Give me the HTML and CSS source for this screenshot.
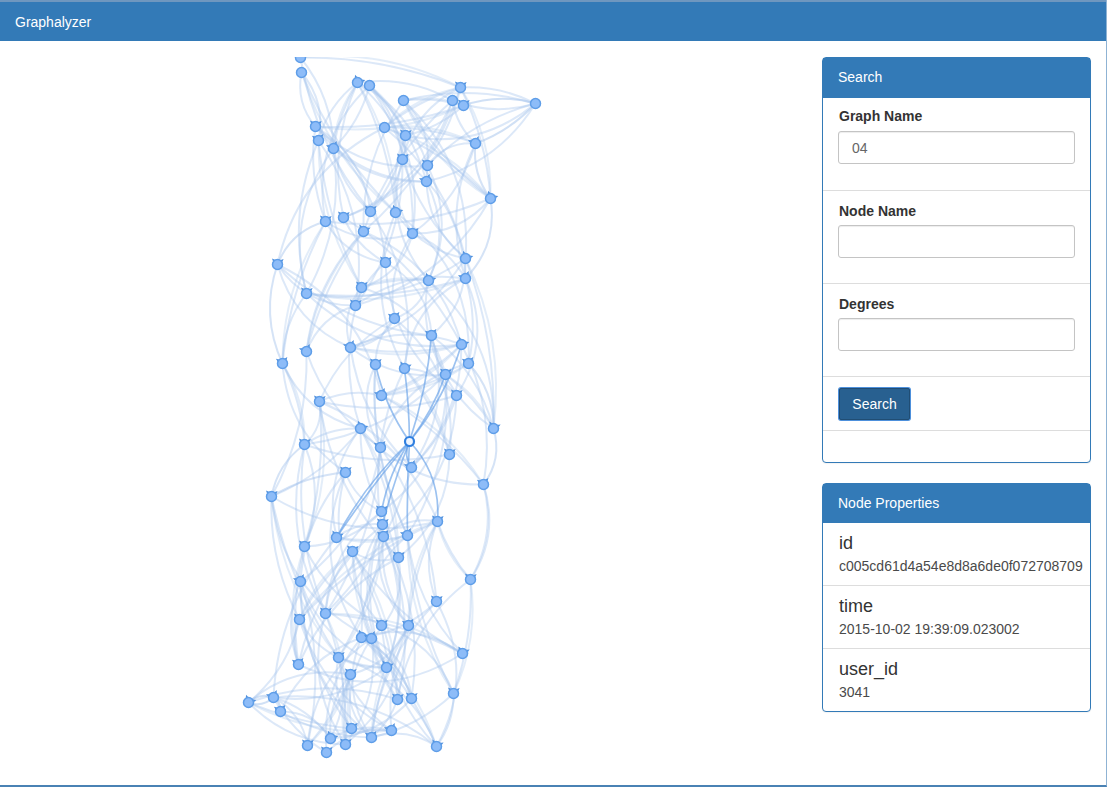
FILE: index.html
```html
<!DOCTYPE html>
<html lang="en">
<head>
<meta charset="utf-8">
<title>Graphalyzer</title>
<link rel="stylesheet" href="styles.css">
</head>
<body>
<div class="app">
  <header class="navbar">Graphalyzer</header>
  <main class="content">
    <div class="graph-area">
      <svg id="graph" class="graph" width="820" height="714" viewBox="-0.5 56.5 820 714" aria-label="Graph"></svg>
    </div>
    <aside class="sidebar">
      <section class="panel">
        <h2 class="panel-heading panel-heading-search">Search</h2>
        <div class="item">
          <label class="field-label" for="graph-name">Graph Name</label>
          <input class="field-input" id="graph-name" type="text" value="04">
        </div>
        <div class="item">
          <label class="field-label" for="node-name">Node Name</label>
          <input class="field-input" id="node-name" type="text">
        </div>
        <div class="item">
          <label class="field-label" for="degrees">Degrees</label>
          <input class="field-input" id="degrees" type="text">
        </div>
        <div class="item item-button">
          <button class="btn" type="button">Search</button>
        </div>
        <div class="item item-empty"></div>
      </section>
      <section class="panel">
        <h2 class="panel-heading">Node Properties</h2>
        <div class="prop">
          <h4 class="prop-name">id</h4>
          <p class="prop-value">c005cd61d4a54e8d8a6de0f072708709</p>
        </div>
        <div class="prop">
          <h4 class="prop-name">time</h4>
          <p class="prop-value">2015-10-02 19:39:09.023002</p>
        </div>
        <div class="prop">
          <h4 class="prop-name">user_id</h4>
          <p class="prop-value">3041</p>
        </div>
      </section>
    </aside>
  </main>
</div>
<script src="graph.js"></script>
</body>
</html>
```
FILE: styles.css
```css
* { box-sizing: border-box; }
html, body { margin: 0; height: 100%; background: #fff; }
body {
  font-family: "Liberation Sans", Arial, sans-serif;
  font-size: 14px;
  line-height: 20px;
  color: #333;
  overflow: hidden;
}
.app {
  width: 1107px;
  height: 787px;
  border-bottom: 2px solid #4a82b4;
  border-right: 1px solid #8fb3d4;
  display: flex;
  flex-direction: column;
}
.navbar {
  height: 41px;
  flex: none;
  background: #337ab7;
  border-top: 2px solid #6f97bf;
  color: #fff;
  padding: 11px 15px 0;
  line-height: 18px;
}
.content { flex: 1; display: flex; min-height: 0; }
.graph-area { width: 822px; flex: none; padding-top: 16px; }
.graph { display: block; }
.sidebar {
  width: 269px;
  flex: none;
  padding-top: 16px;
  display: flex;
  flex-direction: column;
  gap: 20px;
}
.panel {
  border: 1px solid #337ab7;
  border-radius: 4px;
  background: #fff;
  box-shadow: 0 1px 1px rgba(0,0,0,.05);
}
.panel-heading {
  margin: 0;
  background: #337ab7;
  color: #fff;
  font-size: 14px;
  font-weight: 400;
  line-height: 20px;
  padding: 9px 15px 10px;
}
.panel-heading-search { padding-bottom: 11px; }
.item { height: 93px; padding: 8px 15px 0; border-bottom: 1px solid #ddd; }
.item + .item { padding-top: 10px; }
.field-label {
  display: block;
  padding-left: 1px;
  font-weight: 700;
  margin-bottom: 4px;
}
.panel-heading + .item .field-label { margin-bottom: 5px; }
.field-input {
  display: block;
  width: 237px;
  height: 33px;
  padding: 6px 13px;
  font: 14px/20px "Liberation Sans", Arial, sans-serif;
  color: #666;
  background: #fff;
  border: 1px solid #c4c4c4;
  border-radius: 3px;
  box-shadow: inset 0 1px 1px rgba(0,0,0,.075);
}
.item.item-button { height: 54px; padding: 11px 15px 0 16px; }
.item-empty { height: 31px; border-bottom: 0; }
.btn {
  display: block;
  width: 71px;
  height: 32px;
  padding: 0;
  font: 14px/20px "Liberation Sans", Arial, sans-serif;
  color: #fff;
  background: #286090;
  border: 1px solid #204d74;
  border-radius: 2px;
  box-shadow: 0 0 0 1px #4d90dc;
}
.prop { height: 63px; padding: 10px 15px 0 16px; border-bottom: 1px solid #ddd; }
.prop:last-child { height: 62px; border-bottom: 0; }
.prop-name {
  margin: 0 0 4px;
  font-size: 18px;
  font-weight: 400;
  line-height: 20px;
  white-space: nowrap;
}
.prop-value {
  margin: 0;
  color: #4a4a4a;
  font-size: 14px;
  line-height: 18px;
  white-space: nowrap;
}
```
FILE: graph.js
```js
// Force-directed graph: node positions and edges as data, drawn into the SVG.
const NS = "http://www.w3.org/2000/svg";
const svg = document.getElementById("graph");
const N = [[300,57,0],[301,72,0],[357,82,1],[369,85,0],[460,87,1],[403,100,0],[452,100,0],[463,105,1],[535,103,0],[315,126,1],[384,127,0],[318,140,1],[333,148,1],[405,135,1],[475,143,1],[402,159,1],[427,165,1],[426,181,1],[490,198,1],[325,221,1],[343,217,1],[370,211,1],[395,212,1],[363,231,1],[412,233,1],[277,264,1],[385,262,1],[465,258,1],[465,278,1],[428,280,1],[361,287,1],[306,293,1],[355,305,1],[394,318,1],[431,335,1],[461,344,1],[350,347,1],[306,351,1],[282,363,1],[375,364,1],[404,368,1],[468,363,1],[445,374,1],[381,395,1],[456,395,1],[319,401,1],[360,428,1],[493,428,1],[304,444,1],[380,447,1],[449,454,1],[411,467,1],[345,472,1],[483,484,1],[271,496,1],[381,511,1],[437,521,1],[382,524,1],[336,537,1],[383,536,1],[407,535,1],[304,546,1],[352,551,1],[398,557,1],[300,581,1],[470,579,1],[436,601,1],[299,619,1],[325,613,1],[408,625,1],[381,625,1],[361,637,1],[371,638,1],[338,657,1],[298,664,1],[386,667,1],[462,653,1],[350,674,1],[453,693,1],[273,697,1],[397,699,1],[411,698,1],[248,702,1],[280,711,1],[391,730,1],[351,728,1],[371,737,1],[330,738,1],[345,744,1],[307,745,1],[326,752,1],[436,746,1]];
const HUB = [409, 441];
const CENTER_X = 385;

function el(name, attrs, parent) {
  const e = document.createElementNS(NS, name);
  for (const k in attrs) e.setAttribute(k, attrs[k]);
  parent.appendChild(e);
  return e;
}
function arc(a, b, bend, stroke, width, opacity) {
  const mx = (a[0] + b[0]) / 2, my = (a[1] + b[1]) / 2;
  const dx = b[0] - a[0], dy = b[1] - a[1];
  el("path", {
    d: `M${a[0]} ${a[1]}Q${mx - dy * bend} ${my + dx * bend} ${b[0]} ${b[1]}`,
    fill: "none", stroke, "stroke-width": width, "stroke-opacity": opacity
  }, svg);
}
function hash(i, j) {
  let h = Math.imul(i * 2654435761 + j * 40503 + 97, 0x5bd1e995);
  h ^= h >>> 13;
  h = Math.imul(h + j * 31, 0x5bd1e995);
  h ^= h >>> 15;
  return (h >>> 0) % 1000;
}
const EDGE = "#a2c2ec";

// Ordinary edges: every node links to three others of its neighbourhood;
// arcs mostly bulge away from the centre column, as in a force layout.
N.forEach((a, i) => {
  const picks = N.map((b, j) => ({ b, j, d: Math.hypot(b[0] - a[0], b[1] - a[1]), s: hash(i, j) }))
    .filter(o => o.j !== i && o.d > 45 && o.d < 175)
    .map(o => ({ ...o, s: o.s * (Math.abs(o.b[1] - a[1]) > Math.abs(o.b[0] - a[0]) ? 1 : 1.9) }))
    .sort((x, y) => x.s - y.s)
    .slice(0, 3);
  for (const { b, j } of picks) {
    const h = hash(j, i);
    const mag = 0.1 + (h % 6) * 0.035;
    const dy = b[1] - a[1];
    const midX = (a[0] + b[0]) / 2;
    const outward = (midX < CENTER_X ? -1 : 1);
    const sign = Math.sign(-dy * outward) || 1;
    const s = h % 10 < 7 ? sign : -sign;
    arc(a, b, s * mag, EDGE, 2, 0.38);
    if (h % 6 === 0) arc(a, b, s * mag * 1.5, EDGE, 2, 0.3);
  }
});

// Named edges at the outer nodes and around the highlighted hub.
arc([535,103],[463,105],0.16,EDGE,2,.5);
arc([535,103],[475,143],-0.12,EDGE,2,.5);
arc([490,198],[475,143],-0.2,EDGE,2,.45);
arc([490,198],[465,278],-0.25,EDGE,2,.45);
arc([277,264],[325,221],-0.25,EDGE,2,.45);
arc([277,264],[282,363],0.2,EDGE,2,.45);
arc([271,496],[304,444],-0.2,EDGE,2,.45);
arc([271,496],[345,472],-0.12,EDGE,2,.45);
arc([493,428],[483,484],-0.25,EDGE,2,.45);
arc([468,363],[493,428],-0.2,EDGE,2,.45);
arc([248,702],[273,697],0.3,EDGE,2,.5);
arc([248,702],[273,697],-0.3,EDGE,2,.5);
arc([280,711],[273,697],0.3,EDGE,2,.5);
for (const t of [[375,364,-.1],[404,368,.03],[431,335,.06],[461,344,.1],[445,374,.08],[336,537,.08],[336,537,.03],[381,511,.1],[382,524,.03],[411,467,.3],[437,521,-.22],[407,535,.02]]) {
  arc(HUB, t, t[2], "#5f9de6", 1.7, .62);
}

// Nodes: two small self-loop ears, usually splayed on the upper side.
N.forEach((n, i) => {
  if (n[2]) {
    const turn = [0, 0, 0, 12, -12, 25, 0, -25][hash(i, 3) % 8];
    for (const base of [-42, 48]) {
      const r = (base + turn) * Math.PI / 180;
      const u = [Math.sin(r), -Math.cos(r)], w = [u[1], -u[0]];
      const p = (o, s) => `${(n[0] + u[0] * o + w[0] * s).toFixed(1)} ${(n[1] + u[1] * o + w[1] * s).toFixed(1)}`;
      el("path", { d: `M${p(4, -1.8)}L${p(8.2, 0)}L${p(4, 1.8)}Z`, fill: "#4f8fdc" }, svg);
    }
  }
  el("circle", { cx: n[0], cy: n[1], r: 5, fill: "#8dbcf8", stroke: "#5f9ee8", "stroke-width": 1.5 }, svg);
});
el("circle", { cx: HUB[0], cy: HUB[1], r: 4.5, fill: "#eef5ff", stroke: "#2f7fe0", "stroke-width": 2.2 }, svg);
```
